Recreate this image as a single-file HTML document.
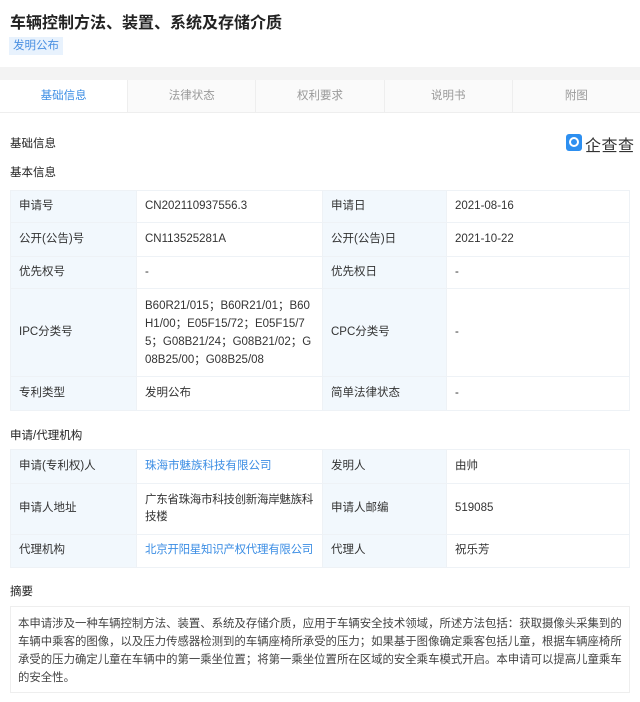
<!DOCTYPE html>
<html><head><meta charset="utf-8"><style>
*{margin:0;padding:0;box-sizing:border-box}
body{width:640px;height:702px;background:#fff;font-family:"Liberation Sans","Noto Sans CJK SC",sans-serif;font-size:11.5px;color:#333;position:relative;overflow:hidden}
.abs{position:absolute}
h1{position:absolute;left:10px;top:9px;font-size:16px;font-weight:bold;color:#222}
.tag{position:absolute;left:9px;top:37px;height:18px;padding:0 4px;background:#e8f2fd;color:#4a90e2;font-size:11.5px;line-height:18px}
.band{position:absolute;left:0;top:67px;width:640px;height:13px;background:#f3f3f3}
.tabs{position:absolute;left:0;top:80px;width:640px;height:33px;border-bottom:1px solid #eee;display:flex}
.tabs div{flex:1;text-align:center;line-height:32px;color:#999;background:#fafafa;border-left:1px solid #eee;font-size:11.5px}
.tabs div.on{background:#fff;color:#3c8ee4;border-left:none}
.sec{position:absolute;left:10px;font-size:11.5px;color:#222}
table{position:absolute;left:10px;width:620px;border-collapse:collapse;font-size:11.5px;table-layout:fixed}
td{border:1px solid #eef2f6;padding:0 8px;vertical-align:middle;line-height:17.5px;color:#333;word-break:break-all}
td.l{background:#f2f8fd}
a{color:#3c8ee4;text-decoration:none}
.abst{position:absolute;left:10px;top:606px;width:620px;height:87px;border:1px solid #eee;padding:8px 7px;line-height:18px;font-size:11.4px;color:#444}
</style></head><body>
<h1>车辆控制方法、装置、系统及存储介质</h1>
<div class="tag">发明公布</div>
<div class="band"></div>
<div class="tabs"><div class="on">基础信息</div><div>法律状态</div><div>权利要求</div><div>说明书</div><div>附图</div></div>
<div class="sec" style="top:135px">基础信息</div>
<div class="abs" style="left:566px;top:134px;width:16px;height:17px;background:#2d8ff0;border-radius:3px"><div style="position:absolute;left:3px;top:3px;width:10px;height:10px;border:2px solid #fff;border-radius:50%"></div></div>
<div class="abs" style="left:585px;top:132px;font-size:16px;color:#333;letter-spacing:0.5px">企查查</div>
<div class="sec" style="top:164px">基本信息</div>
<table style="top:190px">
<colgroup><col style="width:126px"><col style="width:186px"><col style="width:124px"><col></colgroup>
<tr style="height:32px"><td class="l">申请号</td><td>CN202110937556.3</td><td class="l">申请日</td><td>2021-08-16</td></tr>
<tr style="height:34px"><td class="l">公开(公告)号</td><td>CN113525281A</td><td class="l">公开(公告)日</td><td>2021-10-22</td></tr>
<tr style="height:32px"><td class="l">优先权号</td><td>-</td><td class="l">优先权日</td><td>-</td></tr>
<tr style="height:88px"><td class="l">IPC分类号</td><td style="line-height:18px">B60R21/015；B60R21/01；B60H1/00；E05F15/72；E05F15/75；G08B21/24；G08B21/02；G08B25/00；G08B25/08</td><td class="l">CPC分类号</td><td>-</td></tr>
<tr style="height:34px"><td class="l">专利类型</td><td>发明公布</td><td class="l">简单法律状态</td><td>-</td></tr>
</table>
<div class="sec" style="top:427px">申请/代理机构</div>
<table style="top:449px">
<colgroup><col style="width:126px"><col style="width:186px"><col style="width:124px"><col></colgroup>
<tr style="height:34px"><td class="l">申请(专利权)人</td><td><a>珠海市魅族科技有限公司</a></td><td class="l">发明人</td><td>由帅</td></tr>
<tr style="height:51px"><td class="l">申请人地址</td><td style="padding-right:4px;letter-spacing:-0.3px">广东省珠海市科技创新海岸魅族科技楼</td><td class="l">申请人邮编</td><td>519085</td></tr>
<tr style="height:33px"><td class="l">代理机构</td><td style="padding-right:4px;white-space:nowrap;letter-spacing:-0.3px"><a>北京开阳星知识产权代理有限公司</a></td><td class="l">代理人</td><td>祝乐芳</td></tr>
</table>
<div class="sec" style="top:583px">摘要</div>
<div class="abst">本申请涉及一种车辆控制方法、装置、系统及存储介质，应用于车辆安全技术领域，所述方法包括：获取摄像头采集到的车辆中乘客的图像，以及压力传感器检测到的车辆座椅所承受的压力；如果基于图像确定乘客包括儿童，根据车辆座椅所承受的压力确定儿童在车辆中的第一乘坐位置；将第一乘坐位置所在区域的安全乘车模式开启。本申请可以提高儿童乘车的安全性。</div>
</body></html>
